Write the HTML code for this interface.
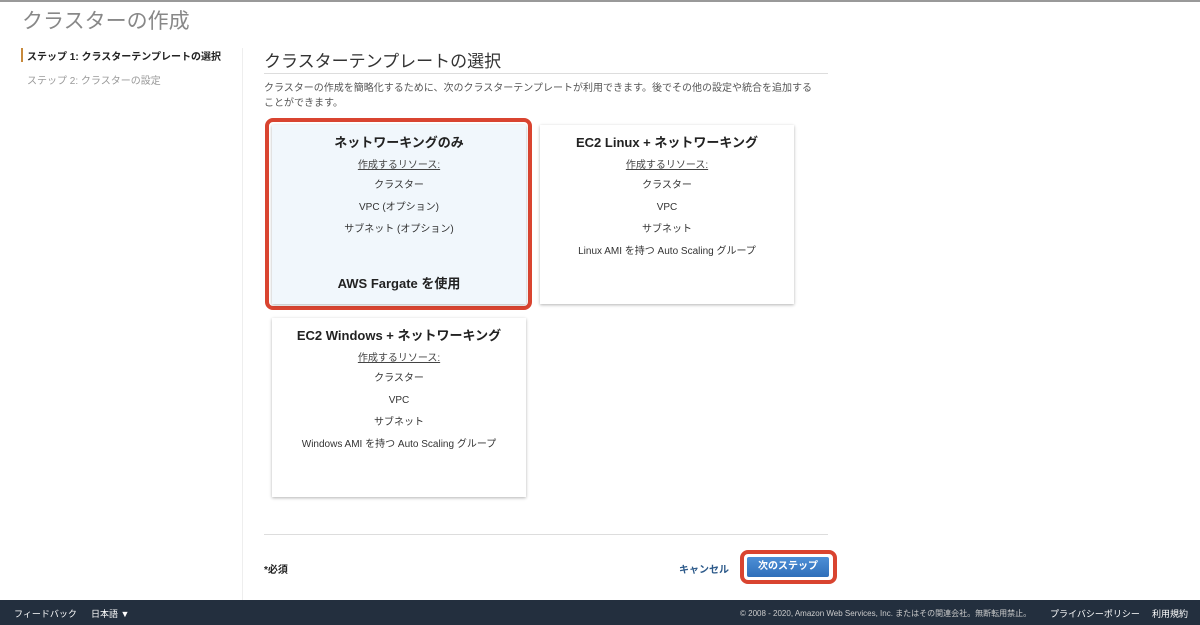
<!DOCTYPE html>
<html><head><meta charset="utf-8"><style>
*{margin:0;padding:0;box-sizing:border-box}
body{width:1200px;height:625px;position:relative;background:#fff;font-family:"Liberation Sans","Noto Sans CJK JP",sans-serif;color:#333;overflow:hidden}
.a{position:absolute;white-space:nowrap}
.card{position:absolute;width:254px;height:179px;background:#fff;box-shadow:0 1px 3px rgba(0,0,0,.3);text-align:center;font-size:10px;color:#333}
.card h3{font-size:13px;font-weight:bold;margin-top:10px;line-height:16px;color:#222}
.card u{display:block;margin-top:9px;line-height:12px;color:#444}
.card p{margin-top:10px;line-height:12px}
.card p.f{margin-top:8px}
</style></head><body>
<div class="a" style="left:0;top:0;width:1200px;height:2px;background:#999"></div>
<div class="a" style="left:22px;top:5px;font-size:21px;color:#888">クラスターの作成</div>
<div class="a" style="left:21px;top:48px;width:2px;height:14px;background:#c7893b"></div>
<div class="a" style="left:27px;top:48px;font-size:10px;font-weight:bold;color:#222">ステップ 1: クラスターテンプレートの選択</div>
<div class="a" style="left:27px;top:72px;font-size:10px;color:#999">ステップ 2: クラスターの設定</div>
<div class="a" style="left:242px;top:48px;width:1px;height:552px;background:#eee"></div>
<div class="a" style="left:264px;top:47px;font-size:17px;color:#333">クラスターテンプレートの選択</div>
<div class="a" style="left:264px;top:73px;width:564px;height:1px;background:#ddd"></div>
<div class="a" style="left:264px;top:81px;font-size:10px;line-height:15px;color:#555;white-space:normal;width:552px">クラスターの作成を簡略化するために、次のクラスターテンプレートが利用できます。後でその他の設定や統合を追加することができます。</div>
<div class="a" style="left:265px;top:118px;width:267px;height:192px;border:4px solid #d94430;border-radius:8px"></div>
<div class="card" style="left:272px;top:125px;background:#f1f7fc;height:179px">
<h3>ネットワーキングのみ</h3><u>作成するリソース:</u><p class="f">クラスター</p><p>VPC (オプション)</p><p>サブネット (オプション)</p>
<h3 style="margin-top:40px">AWS Fargate を使用</h3></div>
<div class="card" style="left:540px;top:125px">
<h3>EC2 Linux + ネットワーキング</h3><u>作成するリソース:</u><p class="f">クラスター</p><p>VPC</p><p>サブネット</p><p>Linux AMI を持つ Auto Scaling グループ</p></div>
<div class="card" style="left:272px;top:318px">
<h3>EC2 Windows + ネットワーキング</h3><u>作成するリソース:</u><p class="f">クラスター</p><p>VPC</p><p>サブネット</p><p>Windows AMI を持つ Auto Scaling グループ</p></div>
<div class="a" style="left:264px;top:534px;width:564px;height:1px;background:#ddd"></div>
<div class="a" style="left:264px;top:561px;font-size:10px;font-weight:bold;color:#222">*必須</div>
<div class="a" style="left:679px;top:561px;font-size:10px;font-weight:bold;color:#2d5a8a">キャンセル</div>
<div class="a" style="left:740px;top:550px;width:97px;height:34px;border:4px solid #d94430;border-radius:8px"></div>
<div class="a" style="left:746px;top:556px;width:84px;height:22px;background:linear-gradient(#4d8fd6,#2f6fba);border:1px solid #fff;border-radius:3px;color:#fff;font-size:10px;font-weight:bold;display:flex;align-items:center;justify-content:center;line-height:12px">次のステップ</div>
<div class="a" style="left:0;top:600px;width:1200px;height:25px;background:#232f3e"></div>
<div class="a" style="left:14px;top:607px;font-size:9px;color:#fff">フィードバック</div>
<div class="a" style="left:91px;top:607px;font-size:9px;color:#fff">日本語 ▼</div>
<div class="a" style="left:740px;top:608px;font-size:8px;color:#ccc">© 2008 - 2020, Amazon Web Services, Inc. またはその関連会社。無断転用禁止。</div>
<div class="a" style="left:1050px;top:607px;font-size:9px;color:#fff">プライバシーポリシー</div>
<div class="a" style="left:1152px;top:607px;font-size:9px;color:#fff">利用規約</div>
</body></html>
